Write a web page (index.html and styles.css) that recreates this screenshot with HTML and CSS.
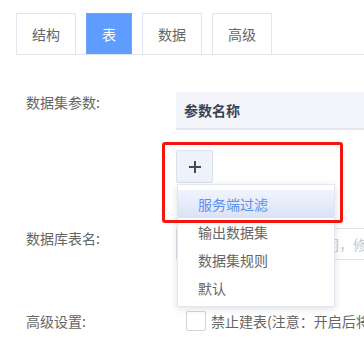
FILE: index.html
```html
<!DOCTYPE html>
<html lang="zh-CN">
<head>
<meta charset="utf-8">
<title>数据集设置</title>
<link rel="stylesheet" href="styles.css">
</head>
<body>
<div class="page">
  <div class="tabs">
    <div class="tab">结构</div>
    <div class="tab active">表</div>
    <div class="tab">数据</div>
    <div class="tab">高级</div>
  </div>

  <div class="form">
    <div class="row">
      <div class="label">数据集参数:</div>
      <div class="content">
        <div class="table-head">参数名称</div>
        <div class="add-wrap">
          <button class="add-btn" type="button">
            <svg width="12" height="12" viewBox="0 0 12 12"><path d="M0 6H12M6 0V12" stroke="#3f4a5a" stroke-width="2" fill="none"/></svg>
          </button>
          <ul class="menu">
            <li class="menu-item current">服务端过滤</li>
            <li class="menu-item">输出数据集</li>
            <li class="menu-item">数据集规则</li>
            <li class="menu-item">默认</li>
          </ul>
        </div>
      </div>
    </div>

    <div class="row row-table">
      <div class="label">数据库表名:</div>
      <div class="content">
        <input class="text-input" type="text" placeholder="默认与数据集名称相同，修改后将重新建表">
      </div>
    </div>

    <div class="row row-adv">
      <div class="label">高级设置:</div>
      <div class="content check-line">
        <span class="checkbox"></span>
        <span class="check-text">禁止建表(注意：开启后将不会自动创建数据库表)</span>
      </div>
    </div>
  </div>

  <div class="highlight-box"></div>
</div>
</body>
</html>
```

FILE: styles.css
```css
* { box-sizing: border-box; }

html, body {
  margin: 0;
  padding: 0;
  overflow: hidden;
  background: #fff;
}

body {
  font-family: "Noto Sans CJK SC", "Microsoft YaHei", sans-serif;
  font-size: 14px;
  color: #666;
}

.page {
  position: relative;
  width: 460px;
  height: 349px;
  padding-top: 13px;
}

.tabs {
  display: flex;
  gap: 10px;
  margin-left: 16px;
  border-bottom: 1px solid #dfe4ed;
}

.tab {
  height: 41px;
  line-height: 40px;
  padding: 0 15px;
  border: 1px solid #dfe4ed;
  border-bottom: none;
  color: #666;
  white-space: nowrap;
}

.tab.active {
  background: #5e9cfd;
  border-color: #6ea6fb;
  color: #fff;
}

.form {
  margin-top: 37px;
}

.row {
  display: flex;
  align-items: flex-start;
}

.label {
  width: 176px;
  padding-left: 26px;
  line-height: 20px;
  color: #666;
  flex: none;
}

.content {
  flex: 1;
}

.table-head {
  height: 38px;
  line-height: 36px;
  padding-left: 8px;
  background: #f3f5fa;
  border-bottom: 2px solid #e1e6ef;
  font-weight: bold;
  color: #3a4354;
}

.add-wrap {
  position: relative;
  margin-top: 20px;
  width: 37px;
}

.add-btn {
  display: flex;
  align-items: center;
  justify-content: center;
  width: 37px;
  height: 33px;
  padding: 0;
  background: #eef2fa;
  border: 1px solid #dce2ed;
  border-radius: 2px;
}

.menu {
  position: absolute;
  top: 34px;
  left: 1px;
  z-index: 5;
  width: 158px;
  margin: 0;
  padding: 5px 0 4px;
  list-style: none;
  background: #fff;
  border: 1px solid #e1e6ef;
  box-shadow: 0 2px 8px rgba(0, 0, 0, 0.12);
}

.menu-item {
  height: 28px;
  line-height: 28px;
  padding-left: 20px;
  color: #666;
  white-space: nowrap;
}

.menu-item.current {
  background: linear-gradient(#f0f4fd, #d9e3f6);
  color: #5c90ea;
}

.row-table {
  margin-top: 45px;
}

.text-input {
  display: block;
  width: 100%;
  height: 32px;
  padding: 0 0 0 22px;
  border: 1px solid #dde3ee;
  border-radius: 2px;
  font-family: inherit;
  font-size: 14px;
  color: #666;
  outline: none;
}

.text-input::placeholder {
  color: #c3c7cf;
}

.row-adv {
  margin-top: 51px;
}

.check-line {
  display: flex;
  align-items: center;
  gap: 5px;
  padding-left: 10px;
  height: 20px;
  white-space: nowrap;
}

.checkbox {
  width: 20px;
  height: 20px;
  border: 1px solid #cfd3da;
  border-radius: 2px;
  background: #fff;
  flex: none;
}

.check-text {
  color: #666;
}

.highlight-box {
  position: absolute;
  left: 162px;
  top: 142px;
  width: 181px;
  height: 81px;
  border: 3px solid #f5150f;
  border-radius: 3px;
  z-index: 10;
  pointer-events: none;
}
```
